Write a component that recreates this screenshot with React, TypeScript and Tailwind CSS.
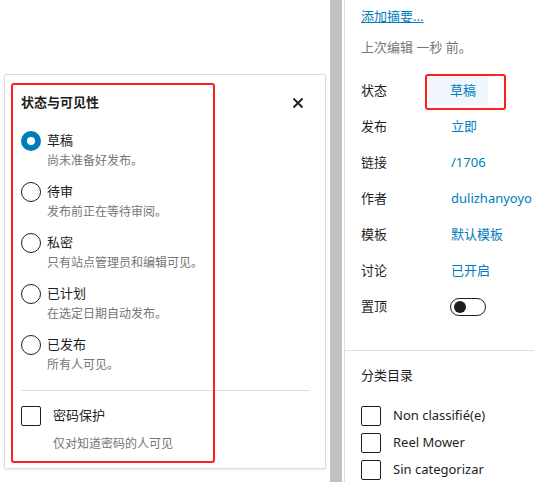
import React from "react";

const font = {
  fontFamily: '"Noto Sans", "Noto Sans CJK SC", sans-serif',
};

const statuses = [
  { label: "草稿", help: "尚未准备好发布。", checked: true },
  { label: "待审", help: "发布前正在等待审阅。" },
  { label: "私密", help: "只有站点管理员和编辑可见。" },
  { label: "已计划", help: "在选定日期自动发布。" },
  { label: "已发布", help: "所有人可见。" },
];

const summaryRows = [
  { label: "发布", value: "立即" },
  { label: "链接", value: "/1706" },
  { label: "作者", value: "dulizhanyoyo" },
  { label: "模板", value: "默认模板" },
  { label: "讨论", value: "已开启" },
];

const categories = ["Non classifié(e)", "Reel Mower", "Sin categorizar"];

function Radio({ checked }: { checked?: boolean }) {
  if (checked) {
    return (
      <span className="flex w-[20px] h-[20px] shrink-0 items-center justify-center rounded-full bg-[#007cba]">
        <span className="w-[8px] h-[8px] rounded-full bg-white" />
      </span>
    );
  }
  return (
    <span className="w-[20px] h-[20px] shrink-0 rounded-full border border-[#1e1e1e] bg-white" />
  );
}

function Checkbox() {
  return (
    <span className="w-[20px] h-[20px] shrink-0 rounded-[2px] border border-[#1e1e1e] bg-white" />
  );
}

function StatusPopover() {
  return (
    <div className="relative w-[322px] h-[395px] rounded-[2px] border border-[#dcdcdc] bg-white shadow-[0_1px_2px_rgba(0,0,0,0.08)]">
      <div className="px-4 pt-[16px]">
        <div className="flex h-[24px] items-center justify-between">
          <h2 className="text-[13px] font-bold text-[#1e1e1e]">状态与可见性</h2>
          <svg width="12" height="12" viewBox="0 0 12 12" className="mr-[5px]">
            <path d="M1.5 1.5l9 9M10.5 1.5l-9 9" stroke="#1e1e1e" strokeWidth="1.8" />
          </svg>
        </div>

        <div className="mt-4 flex flex-col gap-[11px]">
          {statuses.map((s) => (
            <div key={s.label}>
              <div className="flex h-[20px] items-center gap-[6px]">
                <Radio checked={s.checked} />
                <span className="text-[13px] text-[#1e1e1e]">{s.label}</span>
              </div>
              <div className="pl-[26px] text-[12px] leading-[20px] text-[#757575]">
                {s.help}
              </div>
            </div>
          ))}
        </div>

        <div className="mt-[15px] h-px bg-[#dddddd]" />

        <div className="mt-[15px] flex h-[20px] items-center gap-[12px]">
          <Checkbox />
          <span className="text-[13px] text-[#1e1e1e]">密码保护</span>
        </div>
        <div className="mt-[8px] pl-[32px] text-[12px] leading-[20px] text-[#757575]">
          仅对知道密码的人可见
        </div>
      </div>

      {/* highlight frame */}
      <div className="absolute left-[6px] top-[8px] w-[204px] h-[380px] rounded-[3px] border-2 border-[#ff1f1f]" />
    </div>
  );
}

function Toggle() {
  return (
    <span className="flex w-[36px] h-[18px] items-center rounded-full border border-[#1e1e1e] bg-white px-[3px]">
      <span className="w-[12px] h-[12px] rounded-full bg-[#1e1e1e]" />
    </span>
  );
}

function Sidebar() {
  return (
    <div className="relative w-[190px] h-[482px] border-l border-[#e0e0e0] bg-white">
      <div className="pl-[16px]">
        <div className="flex h-[22px] mt-[6px] items-center">
          <span className="text-[13px] text-[#007cba] underline">添加摘要...</span>
        </div>
        <div className="flex h-[20px] mt-[10px] items-center text-[13px] text-[#757575]">
          上次编辑 一秒 前。
        </div>

        <div className="mt-[18px] flex h-[30px] items-center">
          <span className="w-[67px] text-[13px] text-[#1e1e1e]">状态</span>
          <span className="flex h-[28px] w-[60px] items-center justify-center pl-[10px] bg-[#f0f6fc] text-[13px] text-[#007cba]">
            草稿
          </span>
        </div>

        <div className="mt-[3px] flex flex-col">
          {summaryRows.map((r) => (
            <div key={r.label} className="flex h-[36px] items-center">
              <span className="w-[90px] text-[13px] text-[#1e1e1e]">{r.label}</span>
              <span className="text-[13px] text-[#007cba]">{r.value}</span>
            </div>
          ))}
          <div className="flex h-[36px] items-center">
            <span className="w-[89px] text-[13px] text-[#1e1e1e]">置顶</span>
            <Toggle />
          </div>
        </div>
      </div>

      <div className="mt-[25px] h-px bg-[#e0e0e0]" />

      <div className="pl-[16px]">
        <div className="mt-[15px] flex h-[20px] items-center text-[13px] text-[#1e1e1e]">
          分类目录
        </div>
        <div className="mt-[20px] flex flex-col gap-[7px]">
          {categories.map((c) => (
            <div key={c} className="flex h-[20px] items-center gap-[12px]">
              <Checkbox />
              <span className="text-[13px] text-[#1e1e1e]">{c}</span>
            </div>
          ))}
        </div>
      </div>

      {/* highlight frame */}
      <div className="absolute left-[80px] top-[74px] w-[81px] h-[36px] rounded-[3px] border-2 border-[#ff1f1f]" />
    </div>
  );
}

export default function App() {
  return (
    <div className="flex w-[535px] h-[482px] overflow-hidden bg-white" style={font}>
      <div className="w-[330px] h-full pl-[4px] pt-[74px]">
        <StatusPopover />
      </div>
      <div className="w-[12px] h-full bg-[#c1c1c1]" />
      <div className="w-[2px] h-full bg-white" />
      <Sidebar />
    </div>
  );
}
